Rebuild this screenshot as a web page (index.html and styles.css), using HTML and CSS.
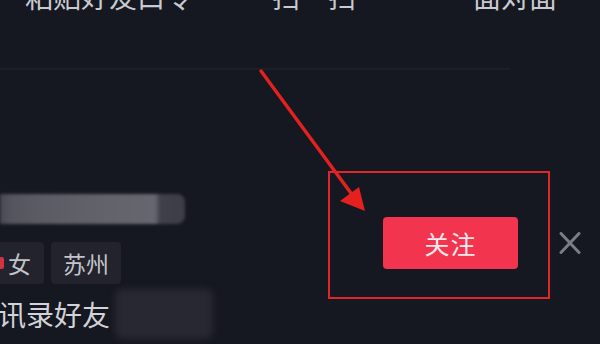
FILE: index.html
```html
<!DOCTYPE html>
<html lang="zh-CN">
<head>
<meta charset="utf-8">
<title>添加朋友</title>
<link rel="stylesheet" href="styles.css">
</head>
<body>
<div class="page">
  <nav class="top-actions">
    <span class="action">粘贴好友口令</span>
    <span class="action">扫一扫</span>
    <span class="action">面对面</span>
  </nav>
  <div class="divider"></div>

  <section class="user-row">
    <div class="info">
      <div class="name-blur"></div>
      <div class="tags">
        <span class="tag tag-gender"><i class="gender-dot"></i>女</span>
        <span class="tag">苏州</span>
      </div>
      <div class="source">
        <span class="source-text">讯录好友</span>
        <span class="source-blur"></span>
      </div>
    </div>
    <button class="follow">关注</button>
    <span class="close" aria-label="关闭">
      <svg width="24" height="22" viewBox="0 0 24 22"><path d="M3 1.5 L21 20.5 M21 1.5 L3 20.5" stroke="#7b7d85" stroke-width="3" stroke-linecap="round"/></svg>
    </span>
  </section>

  <div class="highlight-box"></div>
  <svg class="arrow" width="600" height="344" viewBox="0 0 600 344">
    <line x1="261" y1="71" x2="356" y2="200" stroke="#e5211f" stroke-width="3.4" stroke-linecap="round"/>
    <polygon points="365,211 340,201 359,187" fill="#e5211f"/>
  </svg>
</div>
</body>
</html>
```

FILE: styles.css
```css
html, body {
  margin: 0;
  padding: 0;
  background: #161821;
}
body {
  width: 600px;
  height: 344px;
  overflow: hidden;
  font-family: "Noto Sans CJK SC", "Noto Sans", sans-serif;
  color: #d9dade;
}
.page {
  position: relative;
  width: 600px;
  height: 344px;
  overflow: hidden;
}
.top-actions {
  display: grid;
  grid-template-columns: 247px 201px auto;
  padding-left: 25px;
  margin-top: -18px;
  font-size: 28px;
  line-height: 28px;
  color: #c9cad0;
}
.action {
  white-space: nowrap;
}
.divider {
  margin-top: 58px;
  width: 510px;
  height: 2px;
  background: #1d1f28;
}
.user-row {
  display: flex;
  align-items: flex-start;
  margin-top: 124px;
}
.info {
  flex: 1;
  display: flex;
  flex-direction: column;
}
.name-blur {
  width: 185px;
  height: 30px;
  border-radius: 0 8px 8px 0;
  background: linear-gradient(90deg, #484951 0, #54555d 12px, #5a5b63 40px, #62636a 100px, #66676e 155px, #3f4049 160px, #3c3d46 185px);
  filter: blur(1.5px);
}
.tags {
  display: flex;
  gap: 7px;
  margin-top: 18px;
}
.tag {
  display: flex;
  align-items: center;
  height: 42px;
  padding: 0 12px;
  background: #22232c;
  border-radius: 4px;
  font-size: 23px;
  color: #c3c4ca;
}
.tag-gender {
  padding: 0 13px 0 0;
  margin-left: -4px;
}
.gender-dot {
  display: inline-block;
  width: 8px;
  height: 12px;
  background: #d23243;
  border-radius: 2px;
  margin-right: 4px;
}
.source {
  display: flex;
  align-items: center;
  margin-top: 4px;
}
.source-text {
  font-size: 28px;
  line-height: 52px;
  color: #d2d3d8;
  margin-left: -2px;
}
.source-blur {
  width: 98px;
  height: 50px;
  margin-left: 5px;
  background: #272831;
  border-radius: 8px;
  filter: blur(3px);
}
.follow {
  margin-top: 23px;
  width: 135px;
  height: 52px;
  border: none;
  border-radius: 4px;
  background: #f2344f;
  color: #fbe9ec;
  font-family: "Noto Sans CJK SC", sans-serif;
  font-size: 25px;
  letter-spacing: 1px;
  padding: 0;
}
.close {
  display: flex;
  margin-top: 38px;
  margin-left: 40px;
  margin-right: 18px;
}
.highlight-box {
  position: absolute;
  left: 328px;
  top: 171px;
  width: 218px;
  height: 124px;
  border: 2px solid #e2252a;
}
.arrow {
  position: absolute;
  left: 0;
  top: 0;
  pointer-events: none;
}
```
